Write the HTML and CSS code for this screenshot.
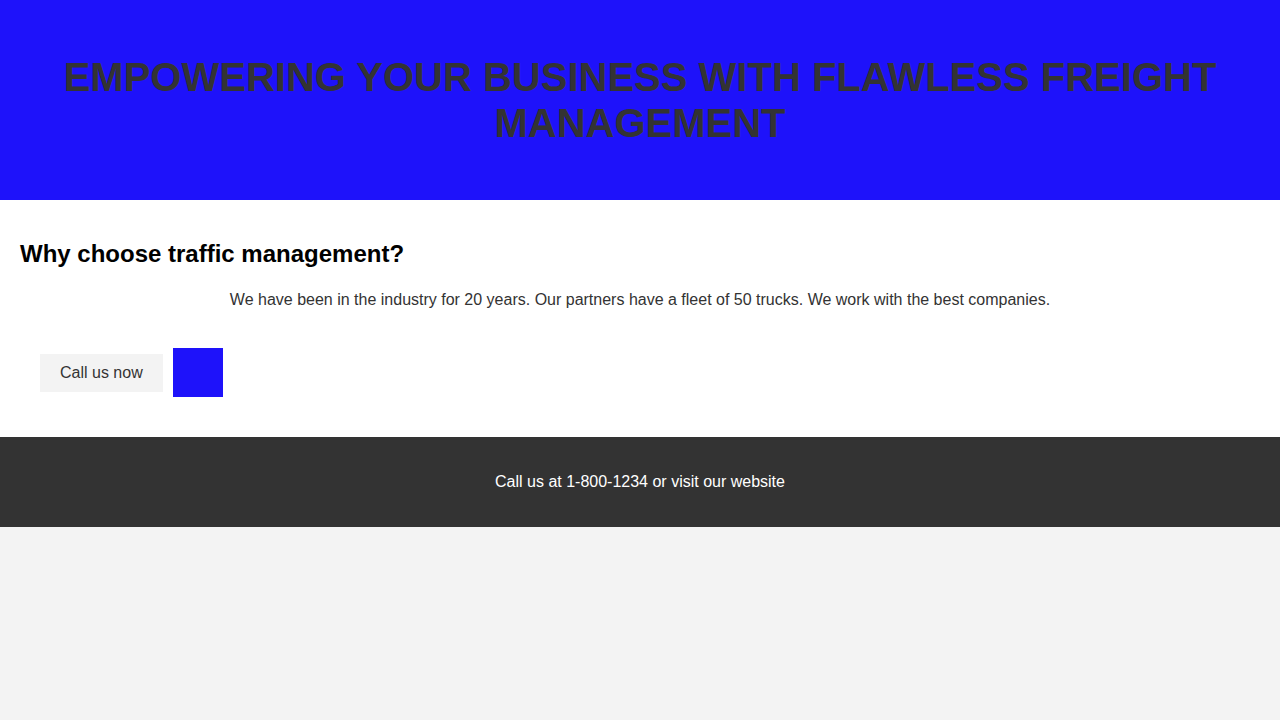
FILE: index.html
```html
<!DOCTYPE html>
<html lang="en">
<head>
<meta charset="utf-8">
<title>Freight Management</title>
<link rel="stylesheet" href="styles.css">
</head>
<body>
<header class="hero">
  <h1 class="hero-title">EMPOWERING YOUR BUSINESS WITH FLAWLESS FREIGHT MANAGEMENT</h1>
</header>
<main class="content">
  <h2 class="content-title">Why choose traffic management?</h2>
  <p class="content-text">We have been in the industry for 20 years. Our partners have a fleet of 50 trucks. We work with the best companies.</p>
  <div class="actions">
    <button class="call-btn" type="button">Call us now</button>
    <div class="swatch"></div>
  </div>
</main>
<footer class="footer">
  <p class="footer-text">Call us at 1-800-1234 or visit our website</p>
</footer>
</body>
</html>
```

FILE: styles.css
```css
* { box-sizing: border-box; }

body {
  margin: 0;
  background: #f3f3f3;
  font-family: "Liberation Sans", Arial, sans-serif;
  color: #333333;
}

.hero {
  background: #1e12fa;
  height: 200px;
  display: flex;
  align-items: center;
  justify-content: center;
  padding: 0 20px;
}

.hero-title {
  margin: 0;
  font-size: 40px;
  font-weight: 700;
  line-height: 46px;
  text-align: center;
  color: #333333;
}

.content {
  background: #ffffff;
  padding: 20px;
}

.content-title {
  margin: 20px 0;
  font-size: 24px;
  font-weight: 700;
  color: #000000;
}

.content-text {
  margin: 16px 0;
  font-size: 16px;
  line-height: 24px;
  text-align: center;
  color: #333333;
}

.actions {
  display: flex;
  align-items: center;
  gap: 10px;
  padding: 20px;
}

.call-btn {
  border: none;
  background: #f3f3f3;
  color: #333333;
  font-family: inherit;
  font-size: 16px;
  line-height: 18px;
  padding: 10px 20px;
  cursor: pointer;
}

.swatch {
  width: 50px;
  height: 49px;
  background: #1e12fa;
}

.footer {
  background: #333333;
  padding: 20px;
}

.footer-text {
  margin: 16px 0;
  font-size: 16px;
  line-height: 18px;
  text-align: center;
  color: #ffffff;
}
```
